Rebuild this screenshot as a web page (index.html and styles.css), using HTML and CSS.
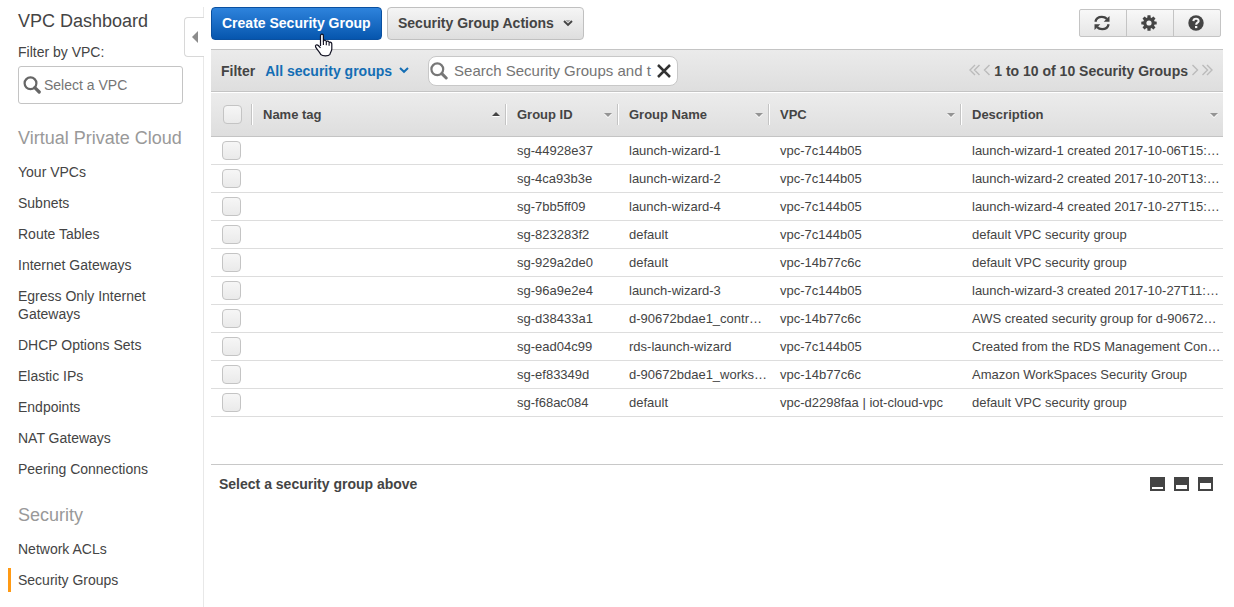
FILE: index.html
```
<!DOCTYPE html>
<html lang="en">
<head>
<meta charset="utf-8">
<title>VPC Dashboard</title>
<link rel="stylesheet" href="styles.css">
</head>
<body>
<div class="app">
  <nav class="sidebar">
    <h1 class="side-title">VPC Dashboard</h1>
    <div class="side-label">Filter by VPC:</div>
    <div class="vpc-select">
      <svg class="lens" width="18" height="18" viewBox="0 0 18 18"><circle cx="7.5" cy="7.3" r="5.9" fill="none" stroke="#666" stroke-width="2.2"/><path d="M11.8 11.6L16.2 16" stroke="#666" stroke-width="3.2" stroke-linecap="round"/></svg>
      <span>Select a VPC</span>
    </div>
    <h2 class="side-head">Virtual Private Cloud</h2>
    <ul class="side-list">
      <li>Your VPCs</li>
      <li>Subnets</li>
      <li>Route Tables</li>
      <li>Internet Gateways</li>
      <li>Egress Only Internet<br>Gateways</li>
      <li>DHCP Options Sets</li>
      <li>Elastic IPs</li>
      <li>Endpoints</li>
      <li>NAT Gateways</li>
      <li>Peering Connections</li>
    </ul>
    <h2 class="side-head second">Security</h2>
    <ul class="side-list">
      <li>Network ACLs</li>
      <li class="active">Security Groups</li>
    </ul>
    <div class="collapse"><svg width="6" height="12" viewBox="0 0 6 12"><path d="M6 0V12L0 6Z" fill="#8c8c8c"/></svg></div>
  </nav>

  <main class="main">
    <header class="toolbar">
      <button class="btn primary">Create Security Group
        <svg class="cursor" width="20" height="24" viewBox="0 0 20 24"><path d="M6.5 13V2.8C6.5.6 9.4.6 9.4 2.8V8.2C10 6.7 12.2 7 12.3 8.7C13 7.6 15 8 15.1 9.5C16 8.8 17.8 9.3 17.8 11V16C17.8 18 16.3 19.5 15.9 21.5C14.5 23.4 8.4 23.2 6.9 21.7C5.6 19 3 16.6 1.7 14.1C.7 12.2 2.9 11 4.3 12.5L6.5 14.8" fill="#fff" stroke="#111122" stroke-width="1.2" stroke-linejoin="round"/><path d="M9.4 8V12M12.3 9V12.3M15.1 10V12.8" stroke="#111122" stroke-width="1.1"/></svg>
      </button>
      <button class="btn actions">Security Group Actions
        <svg width="10" height="7" viewBox="0 0 10 7"><path d="M1 1L5 5L9 1" fill="none" stroke="#444" stroke-width="1.9"/><path d="M2.6 0H7.4L5 2.8Z" fill="#aaa"/></svg>
      </button>
      <div class="icon-group">
        <span class="icon-btn"><svg width="16" height="16" viewBox="0 0 16 16"><path d="M1.4 6.8C2 3.7 4.7 1.8 7.9 1.8C10 1.8 11.7 2.6 12.9 3.9M14.6 9.2C14 12.3 11.3 14.2 8.1 14.2C6 14.2 4.3 13.4 3.1 12.1" fill="none" stroke="#444" stroke-width="2.3"/><path d="M15.5 1V6.8H9.7ZM.5 15V9.2H6.3Z" fill="#444"/></svg></span>
        <span class="icon-btn"><svg width="16" height="16" viewBox="0 0 16 16"><g fill="#444"><rect x="6.4" y="0.3" width="3.2" height="15.4" rx=".5"/><rect x="6.4" y="0.3" width="3.2" height="15.4" rx=".5" transform="rotate(45 8 8)"/><rect x="6.4" y="0.3" width="3.2" height="15.4" rx=".5" transform="rotate(90 8 8)"/><rect x="6.4" y="0.3" width="3.2" height="15.4" rx=".5" transform="rotate(135 8 8)"/><circle cx="8" cy="8" r="5.8"/></g><circle cx="8" cy="8" r="2.6" fill="#f0f0f0"/></svg></span>
        <span class="icon-btn"><svg width="16" height="16" viewBox="0 0 16 16"><circle cx="8" cy="8" r="7.7" fill="#444"/><path d="M5.4 6.1C5.5 2.9 10.8 2.9 10.6 6.1C10.4 7.8 8.2 7.7 8.2 9.7" fill="none" stroke="#f4f4f4" stroke-width="2.1"/><rect x="7" y="11" width="2.3" height="2.1" fill="#f4f4f4"/></svg></span>
      </div>
    </header>

    <div class="filterbar">
      <span class="filter-label">Filter</span>
      <span class="filter-value">All security groups</span>
      <svg class="filter-caret" width="10" height="7" viewBox="0 0 10 7"><path d="M1 1L5 4.8L9 1" fill="none" stroke="#146eb4" stroke-width="2"/></svg>
      <div class="search">
        <svg class="lens" width="18" height="18" viewBox="0 0 18 18"><circle cx="7.3" cy="7.3" r="5.9" fill="none" stroke="#777" stroke-width="2.2"/><path d="M11.8 11.6L16.2 16" stroke="#777" stroke-width="3" stroke-linecap="round"/></svg>
        <span class="search-text">Search Security Groups and t</span>
        <svg width="14" height="14" viewBox="0 0 14 14"><path d="M1 1L13 13M13 1L1 13" stroke="#333" stroke-width="2.5"/></svg>
      </div>
      <div class="pager">
        <svg width="22" height="12" viewBox="0 0 22 12"><path d="M6 1L1 6L6 11M10.5 1L5.5 6L10.5 11M20.5 1L15.5 6L20.5 11" fill="none" stroke="#bbb" stroke-width="1.4"/></svg>
        <span>1 to 10 of 10 Security Groups</span>
        <svg width="22" height="12" viewBox="0 0 22 12"><path d="M1.5 1L6.5 6L1.5 11M11.5 1L16.5 6L11.5 11M16 1L21 6L16 11" fill="none" stroke="#bbb" stroke-width="1.4"/></svg>
      </div>
    </div>

    <section class="table">
      <div class="row head">
        <div class="hcell check"><i class="box"></i></div>
        <div class="hcell">Name tag<i class="arrow up"></i></div>
        <div class="hcell">Group ID<i class="arrow"></i></div>
        <div class="hcell">Group Name<i class="arrow"></i></div>
        <div class="hcell">VPC<i class="arrow"></i></div>
        <div class="hcell last">Description<i class="arrow"></i></div>
      </div>
      <div class="row"><div class="check"><i class="box"></i></div><div></div><div>sg-44928e37</div><div>launch-wizard-1</div><div>vpc-7c144b05</div><div>launch-wizard-1 created 2017-10-06T15:…</div></div>
      <div class="row"><div class="check"><i class="box"></i></div><div></div><div>sg-4ca93b3e</div><div>launch-wizard-2</div><div>vpc-7c144b05</div><div>launch-wizard-2 created 2017-10-20T13:…</div></div>
      <div class="row"><div class="check"><i class="box"></i></div><div></div><div>sg-7bb5ff09</div><div>launch-wizard-4</div><div>vpc-7c144b05</div><div>launch-wizard-4 created 2017-10-27T15:…</div></div>
      <div class="row"><div class="check"><i class="box"></i></div><div></div><div>sg-823283f2</div><div>default</div><div>vpc-7c144b05</div><div>default VPC security group</div></div>
      <div class="row"><div class="check"><i class="box"></i></div><div></div><div>sg-929a2de0</div><div>default</div><div>vpc-14b77c6c</div><div>default VPC security group</div></div>
      <div class="row"><div class="check"><i class="box"></i></div><div></div><div>sg-96a9e2e4</div><div>launch-wizard-3</div><div>vpc-7c144b05</div><div>launch-wizard-3 created 2017-10-27T11:…</div></div>
      <div class="row"><div class="check"><i class="box"></i></div><div></div><div>sg-d38433a1</div><div>d-90672bdae1_contr…</div><div>vpc-14b77c6c</div><div>AWS created security group for d-90672…</div></div>
      <div class="row"><div class="check"><i class="box"></i></div><div></div><div>sg-ead04c99</div><div>rds-launch-wizard</div><div>vpc-7c144b05</div><div>Created from the RDS Management Con…</div></div>
      <div class="row"><div class="check"><i class="box"></i></div><div></div><div>sg-ef83349d</div><div>d-90672bdae1_works…</div><div>vpc-14b77c6c</div><div>Amazon WorkSpaces Security Group</div></div>
      <div class="row"><div class="check"><i class="box"></i></div><div></div><div>sg-f68ac084</div><div>default</div><div>vpc-d2298faa | iot-cloud-vpc</div><div>default VPC security group</div></div>
    </section>

    <section class="details">
      <span>Select a security group above</span>
      <div class="panes"><i class="pane small"></i><i class="pane medium"></i><i class="pane large"></i></div>
    </section>
  </main>
</div>
</body>
</html>
```
FILE: styles.css
```
* { box-sizing: border-box; }
body {
  margin: 0;
  background: #fff;
  color: #444;
  font: 14px/18px "Liberation Sans", Arial, sans-serif;
}
.app { display: flex; height: 607px; overflow: hidden; padding-top: 7px; }

.sidebar {
  position: relative;
  width: 204px;
  flex: none;
  border-right: 1px solid #e8e8e8;
}
.side-title { margin: 3px 0 0 18px; font-size: 18px; font-weight: 400; line-height: 22px; }
.side-label { margin: 11px 0 0 18px; }
.vpc-select {
  display: flex;
  align-items: center;
  width: 165px;
  height: 38px;
  margin: 5px 0 0 18px;
  padding-left: 4px;
  gap: 3px;
  border: 1px solid #c4c4c4;
  border-radius: 3px;
  color: #757575;
}
.lens { flex: none; }
.side-head { margin: 23px 0 0 18px; font-size: 18px; font-weight: 400; line-height: 22px; color: #999; }
.side-head.second { margin-top: 26px; }
.side-list {
  display: flex;
  flex-direction: column;
  gap: 13px;
  margin: 14px 0 0 8px;
  padding: 0;
  list-style: none;
}
.side-list li { padding-left: 10px; }
.side-list li.active { margin: -3px 0; padding: 3px 0 3px 7px; border-left: 3px solid #ff9a14; }
.collapse {
  position: absolute;
  top: 10px;
  right: -1px;
  display: flex;
  align-items: center;
  width: 20px;
  height: 40px;
  padding-left: 7px;
  background: #fff;
  border: 1px solid #d8d8d8;
  border-right: 0;
  border-radius: 4px 0 0 4px;
}

.main { width: 1012px; margin-left: 7px; }
.toolbar { display: flex; gap: 5px; height: 42px; }
.btn {
  position: relative;
  display: flex;
  align-items: center;
  gap: 10px;
  height: 33px;
  padding: 0 10px 2px;
  border: 1px solid #c0c0c0;
  border-radius: 4px;
  background: linear-gradient(#f5f5f5, #dedede);
  color: #444;
  font: bold 14px/18px "Liberation Sans", Arial, sans-serif;
  white-space: nowrap;
}
.btn.actions { width: 197px; gap: 9px; }
.btn.actions svg { margin-top: 1px; }
.btn.primary { width: 171px; border-color: #0a50a0; background: linear-gradient(#2e83dc, #0656ae); color: #fff; }
.cursor { position: absolute; left: 102px; top: 25px; z-index: 2; }
.icon-group {
  display: flex;
  width: 142px;
  height: 28px;
  margin: 2px 2px 0 auto;
  border: 1px solid #c4c4c4;
  border-radius: 2px;
  background: linear-gradient(#f8f8f8, #e6e6e6);
}
.icon-btn { display: flex; flex: 1; align-items: center; justify-content: center; padding-right: 2px; }
.icon-btn + .icon-btn { border-left: 1px solid #c4c4c4; }

.filterbar {
  display: flex;
  align-items: center;
  height: 43px;
  padding: 0 10px;
  border-top: 1px solid #c4c4c4;
  border-bottom: 1px solid #c4c4c4;
  background: linear-gradient(#ebebeb, #dedede);
  font-weight: bold;
}
.filter-value { margin-left: 10px; color: #146eb4; }
.filter-caret { margin: 0 0 0 7px; }
.search {
  display: flex;
  align-items: center;
  width: 250px;
  height: 30px;
  margin-left: 19px;
  padding: 0 6px 0 1px;
  border: 1px solid #c8c8c8;
  border-radius: 8px;
  background: #fff;
  color: #757575;
  font-size: 15px;
  font-weight: 400;
}
.search-text { width: 198px; margin: 0 5px 0 6px; white-space: nowrap; }
.search svg:last-child { flex: none; }
.pager { display: flex; align-items: center; gap: 3px; margin-left: auto; white-space: nowrap; }
.pager svg { margin-top: -2px; }

.table { height: 372px; padding-top: 1px; font-size: 13px; }
.row {
  display: grid;
  grid-template-columns: 42px 254px 112px 151px 192px 261px;
  align-items: center;
  height: 28px;
  border-bottom: 1px solid #ddd;
}
.row > div { padding-left: 10px; white-space: nowrap; }
.row > .check { display: flex; padding-left: 11px; }
.box {
  width: 19px;
  height: 19px;
  border: 1px solid #c4c4c4;
  border-radius: 4px;
  background: linear-gradient(#f6f6f6, #eaeaea);
}
.row.head {
  height: 44px;
  border-bottom-color: #c4c4c4;
  background: linear-gradient(#ececec, #dedede);
  font-weight: bold;
}
.row > .hcell {
  display: flex;
  align-items: center;
  height: 21px;
  padding-right: 6px;
  border-right: 1px solid #fff;
  box-shadow: inset -1px 0 #c4c4c4;
}
.row > .hcell.check { padding-left: 12px; }
.row > .hcell.last { padding-right: 5px; border-right: 0; box-shadow: none; }
.arrow {
  margin: 1px 0 0 auto;
  border: 4px solid transparent;
  border-top-color: #949494;
  border-bottom: 0;
  filter: drop-shadow(0 1px #fff);
}
.arrow.up { margin-top: -1px; border-top: 0; border-bottom: 4px solid #444; }

.details {
  display: flex;
  justify-content: space-between;
  align-items: center;
  height: 39px;
  padding: 0 10px 1px 8px;
  border-top: 1px solid #c8c8c8;
  font-weight: bold;
}
.panes { display: flex; gap: 9px; }
.pane { width: 15px; height: 14px; border: 2px solid #444; background: #fff; }
.pane.small { border-top-width: 10px; }
.pane.medium { border-top-width: 8px; }
.pane.large { border-top-width: 6px; }
```
